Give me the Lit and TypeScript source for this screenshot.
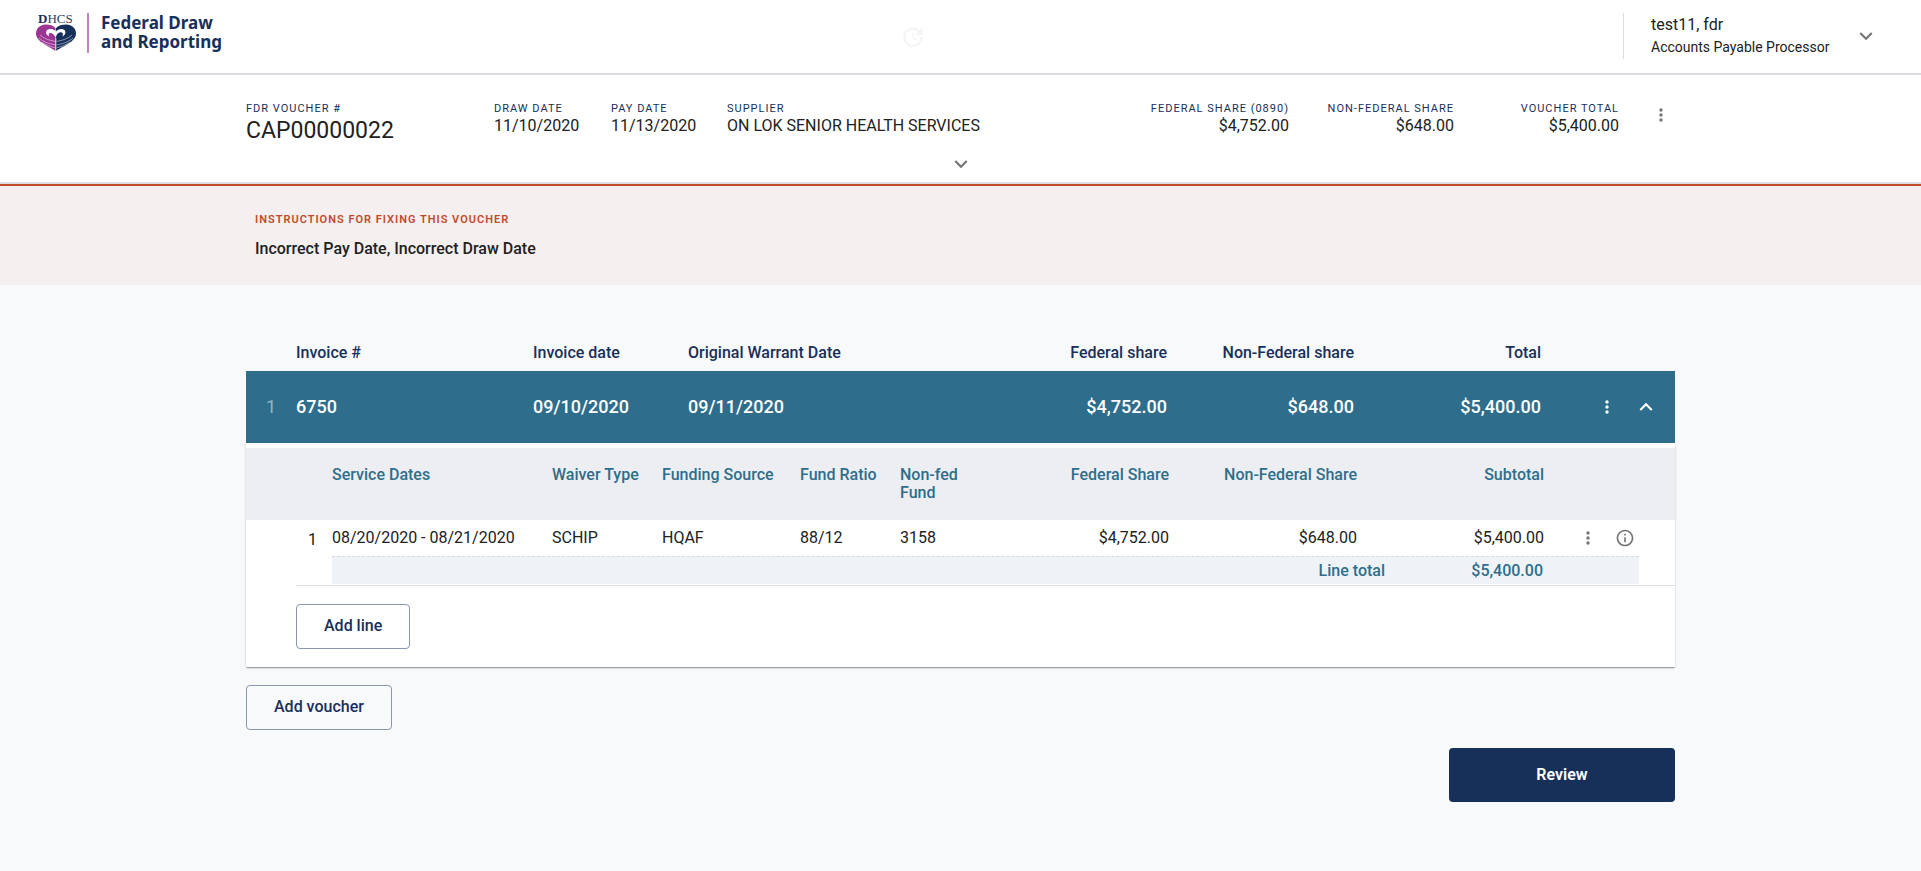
import { LitElement, html, svg, css } from "lit";
import { customElement, property, state } from "lit/decorators.js";

type IconName = "more" | "down" | "up" | "info" | "history";

const ICONS = {
  more: svg`<path d="M12 8c1.1 0 2-.9 2-2s-.9-2-2-2-2 .9-2 2 .9 2 2 2zm0 2c-1.1 0-2 .9-2 2s.9 2 2 2 2-.9 2-2-.9-2-2-2zm0 6c-1.1 0-2 .9-2 2s.9 2 2 2 2-.9 2-2-.9-2-2-2z"/>`,
  down: svg`<path d="M16.59 8.59 12 13.17 7.41 8.59 6 10l6 6 6-6z"/>`,
  up: svg`<path d="M12 8l-6 6 1.41 1.41L12 10.83l4.59 4.58L18 14z"/>`,
  info: svg`<path d="M11 7h2v2h-2zm0 4h2v6h-2zm1-9C6.48 2 2 6.48 2 12s4.48 10 10 10 10-4.48 10-10S17.52 2 12 2zm0 18c-4.41 0-8-3.59-8-8s3.59-8 8-8 8 3.59 8 8-3.59 8-8 8z"/>`,
  history: svg`<path d="M21 10.12h-6.78l2.74-2.82c-2.73-2.7-7.15-2.8-9.88-.1-2.73 2.71-2.73 7.08 0 9.79s7.15 2.71 9.88 0C18.32 15.65 19 14.08 19 12.1h2c0 1.98-.88 4.55-2.64 6.29-3.51 3.48-9.21 3.48-12.72 0-3.5-3.47-3.53-9.11-.02-12.58s9.14-3.47 12.65 0L21 3v7.12zM11.500 8h1.2v4.5l3.3 2-.6 1L11.500 13z"/>`,
};

@customElement("fdr-icon")
class FdrIcon extends LitElement {
  @property() name: IconName = "more";
  @property({ type: Number }) size = 26;

  static styles = css`
    :host { display: block; line-height: 0; }
    .glyph { fill: currentColor; display: block; }
  `;

  render() {
    return html`<svg class="glyph" width=${this.size} height=${this.size} viewBox="0 0 24 24" aria-hidden="true">${ICONS[this.name]}</svg>`;
  }
}

@customElement("fdr-logo")
class FdrLogo extends LitElement {
  static styles = css`
    :host { display: block; }
    .mark { display: block; overflow: visible; }
    .word { font-family: "Liberation Serif", serif; font-size: 13px; fill: #2a4064; }
    .word-bold { font-weight: 700; fill: #17305a; }
  `;

  render() {
    return html`<svg class="mark" width="40" height="40" viewBox="0 0 40 40" role="img" aria-label="DHCS">
      <text class="word" x="2" y="10"><tspan class="word-bold">D</tspan>HCS</text>
      <path fill="#9b3593" d="M19.500 38 C13 33 0 29 0 20.500 C0 15 4.500 11.500 9.500 11.500 C14 11.500 17.500 12.500 19.500 15 Z"/>
      <path fill="#17305a" d="M20 38 C27 33 40 29 40 20.500 C40 15 35.500 11.500 30.500 11.500 C26 11.500 22 12.500 20 15 Z"/>
      <path fill="#fff" d="M20 24 C17.500 22.500 15.500 22.500 13.500 23.500 C9.500 22 9 18 12 16.500 C15 15 18.500 16.500 20 18.500 Z"/>
      <path fill="#9b3593" d="M12.500 21 C14 19 17.500 19.500 19.700 25 C17.500 22.500 15.500 23 13.500 24.500 Z"/>
      <path fill="#fff" d="M20 18.500 C22 16 26 15 28.500 17 C30.500 19.500 29 22 26.500 23.500 C27.500 20.500 26.500 19 24.500 19.200 C22 19.500 20.500 21.500 20 24 Z"/>
      <g fill="none" stroke="#fff" stroke-width="0.7" opacity="0.7">
        <path d="M20 25 V38"/>
        <path d="M4 22 C9 26.500 15 27.500 19.500 28.500"/><path d="M3 25 C8 29.500 15 31 19.500 32"/><path d="M6 29 C10 32 15 33.500 19.500 35"/>
        <path d="M36 22 C31 26.500 25 27.500 20.500 28.500"/><path d="M37 25 C32 29.500 25 31 20.500 32"/><path d="M34 29 C30 32 25 33.500 20.500 35"/>
      </g>
    </svg>`;
  }
}

interface Line {
  dates: string; waiver: string; source: string; ratio: string; fund: string;
  federal: string; nonFederal: string; subtotal: string;
}

@customElement("app-root")
class AppRoot extends LitElement {
  @state() private expanded = true;

  private lines: Line[] = [
    { dates: "08/20/2020 - 08/21/2020", waiver: "SCHIP", source: "HQAF", ratio: "88/12", fund: "3158", federal: "$4,752.00", nonFederal: "$648.00", subtotal: "$5,400.00" },
  ];

  static styles = css`
    :host {
      display: block;
      min-height: 100vh;
      background: #f8f9fb;
      color: #212121;
      font-family: Roboto, "Liberation Sans", sans-serif;
      font-size: 16px;
      line-height: 20px;
    }
    * { box-sizing: border-box; }
    button {
      font: inherit; color: inherit; background: none; border: 0; padding: 0; cursor: pointer;
    }
    h1, h2, p, dl, dd { margin: 0; }
    .wrap { width: min(1429px, 100% - 48px); margin: 0 auto; }

    .topbar {
      display: flex; align-items: flex-start; justify-content: space-between;
      height: 75px; padding: 13px 42px 0 36px;
      background: #fff; border-bottom: 2px solid #dcdde2;
    }
    .brand { display: flex; flex: 1; }
    .brand-name {
      margin: 0 0 0 11px; padding-left: 12px; height: 40px;
      border-left: 2px solid #c583bd;
      font: 700 17px/19px "Noto Sans", "Open Sans", sans-serif; color: #17305a;
    }
    .history { color: #f4f4f5; margin: 11px 89px 0 0; }
    .account { display: flex; flex: 1; justify-content: flex-end; }
    .account-button {
      display: flex; align-items: center; justify-content: space-between;
      width: 256px; height: 46px; padding-left: 27px;
      border-left: 1px solid #dcdde2; text-align: left;
    }
    .account-name, .account-role { display: block; line-height: 22px; }
    .account-role { font-size: 14px; }
    .muted { color: #757575; }

    .summary { background: #fff; border-bottom: 2px solid #dcdde2; height: 109px; }
    .facts {
      display: grid; padding-top: 27px;
      grid-template-columns: 248fr 117fr 116fr 397fr 165fr 165fr 165fr 56px;
    }
    .fact dt {
      font-size: 11px; line-height: 14px; letter-spacing: 1px; color: #17305a;
      white-space: nowrap;
    }
    .fact dd { white-space: nowrap; }
    .fact .large { font-size: 23px; line-height: 30px; }
    .end { text-align: right; }
    .facts-menu { display: flex; justify-content: flex-end; align-items: flex-start; padding: 3px 4px 0 0; }
    .summary-toggle { display: block; margin: 5px auto 0; }

    .notice { background: #f5efef; border-top: 2px solid #c04b2b; height: 101px; }
    .notice-body { padding: 27px 9px 0; }
    .notice h2 {
      font-size: 11px; line-height: 14px; font-weight: 600; letter-spacing: 1px; color: #c04b2b;
    }
    .notice p { margin-top: 12px; font-weight: 500; }

    .main { padding-top: 58px; }
    table, tbody, thead, tfoot { display: block; }
    tr { display: grid; }
    th, td { padding: 0; text-align: left; font-weight: inherit; }
    th.end, td.end { text-align: right; }

    .invoice-row { grid-template-columns: 50px 237fr 155fr 233fr 246fr 187fr 187fr 134px; }
    .invoice-head { color: #17305a; font-weight: 500; padding-bottom: 8px; }
    .invoice {
      align-items: center; height: 72px;
      background: #2e6e8c; color: #fff; font-size: 18px; font-weight: 500;
    }
    .invoice-number { padding-left: 20px; font-weight: 400; color: #94b4c4; }
    .invoice-actions { display: flex; align-items: center; justify-content: flex-end; gap: 16px; padding-right: 16px; }

    .detail-row { display: block; }
    .detail {
      display: block; padding: 5px 0 18px; background: #fff;
      box-shadow: 0 2px 1px -1px rgba(0,0,0,.2), 0 1px 1px rgba(0,0,0,.14), 0 1px 3px rgba(0,0,0,.12);
    }
    .line-row { grid-template-columns: 86px 220fr 110fr 138fr 100fr 80fr 189fr 188fr 187fr 131px; }
    .line-head {
      height: 72px; padding-top: 18px; background: #edeef2;
      color: #2e6e8c; font-weight: 500; line-height: 18px;
    }
    .fund-head { width: 70px; }
    .line { height: 36px; padding-top: 8px; }
    .line-number { padding: 2px 15px 0 0; text-align: right; }
    .line-actions { display: flex; align-items: flex-start; justify-content: flex-end; gap: 17px; padding-right: 40px; }
    .line-total-group { margin-left: 50px; padding: 0 36px 1px; border-bottom: 1px solid #dcdde2; }
    .line-total {
      grid-template-columns: 1053fr 158fr 96px; height: 28px; align-items: center;
      background: #eff3f7; border-top: 1px dashed #d5dade;
      color: #2e6e8c; font-weight: 500;
    }

    .outlined {
      height: 45px; padding: 0 27px 2px; border: 1px solid #8b97ac; border-radius: 4px;
      color: #17305a; font-weight: 500;
    }
    .add-line { margin: 18px 0 0 50px; }
    .add-voucher { margin-top: 18px; }
    .footer { display: flex; justify-content: flex-end; margin-top: 18px; padding-bottom: 48px; }
    .primary {
      width: 226px; height: 54px; border-radius: 4px;
      background: #17305a; color: #fff; font-weight: 600;
    }
  `;

  private fact(label: string, value: string, end = false, large = false) {
    return html`<dl class="fact ${end ? "end" : ""}">
      <dt>${label}</dt><dd class=${large ? "large" : ""}>${value}</dd>
    </dl>`;
  }

  private renderDetail() {
    return html`<tr class="detail-row"><td class="detail" colspan="8">
      <table>
        <thead>
          <tr class="line-row line-head">
            <th></th><th>Service Dates</th><th>Waiver Type</th><th>Funding Source</th><th>Fund Ratio</th>
            <th class="fund-head">Non-fed Fund</th><th class="end">Federal Share</th>
            <th class="end">Non-Federal Share</th><th class="end">Subtotal</th><th></th>
          </tr>
        </thead>
        <tbody>
          ${this.lines.map((l, i) => html`<tr class="line-row line">
            <td class="line-number">${i + 1}</td><td>${l.dates}</td><td>${l.waiver}</td><td>${l.source}</td>
            <td>${l.ratio}</td><td>${l.fund}</td><td class="end">${l.federal}</td>
            <td class="end">${l.nonFederal}</td><td class="end">${l.subtotal}</td>
            <td class="line-actions muted">
              <button aria-label="Line menu"><fdr-icon name="more" size="20"></fdr-icon></button>
              <button aria-label="Line information"><fdr-icon name="info" size="20"></fdr-icon></button>
            </td>
          </tr>`)}
        </tbody>
        <tfoot class="line-total-group">
          <tr class="line-total"><th class="end">Line total</th><td class="end">$5,400.00</td><td></td></tr>
        </tfoot>
      </table>
      <button class="outlined add-line">Add line</button>
    </td></tr>`;
  }

  render() {
    return html`
      <header class="topbar">
        <div class="brand">
          <fdr-logo></fdr-logo>
          <h1 class="brand-name">Federal Draw<br>and Reporting</h1>
        </div>
        <fdr-icon class="history" name="history"></fdr-icon>
        <div class="account">
          <button class="account-button">
            <span>
              <span class="account-name">test11, fdr</span>
              <span class="account-role">Accounts Payable Processor</span>
            </span>
            <fdr-icon class="muted" name="down"></fdr-icon>
          </button>
        </div>
      </header>

      <section class="summary">
        <div class="wrap facts">
          ${this.fact("FDR VOUCHER #", "CAP00000022", false, true)}
          ${this.fact("DRAW DATE", "11/10/2020")}
          ${this.fact("PAY DATE", "11/13/2020")}
          ${this.fact("SUPPLIER", "ON LOK SENIOR HEALTH SERVICES")}
          ${this.fact("FEDERAL SHARE (0890)", "$4,752.00", true)}
          ${this.fact("NON-FEDERAL SHARE", "$648.00", true)}
          ${this.fact("VOUCHER TOTAL", "$5,400.00", true)}
          <div class="facts-menu muted"><button aria-label="Voucher menu"><fdr-icon name="more" size="20"></fdr-icon></button></div>
        </div>
        <button class="summary-toggle muted" aria-label="Show voucher details"><fdr-icon name="down"></fdr-icon></button>
      </section>

      <section class="notice">
        <div class="wrap notice-body">
          <h2>INSTRUCTIONS FOR FIXING THIS VOUCHER</h2>
          <p>Incorrect Pay Date, Incorrect Draw Date</p>
        </div>
      </section>

      <main class="wrap main">
        <table>
          <thead>
            <tr class="invoice-row invoice-head">
              <th></th><th>Invoice #</th><th>Invoice date</th><th>Original Warrant Date</th>
              <th class="end">Federal share</th><th class="end">Non-Federal share</th>
              <th class="end">Total</th><th></th>
            </tr>
          </thead>
          <tbody>
            <tr class="invoice-row invoice">
              <td class="invoice-number">1</td><td>6750</td><td>09/10/2020</td><td>09/11/2020</td>
              <td class="end">$4,752.00</td><td class="end">$648.00</td><td class="end">$5,400.00</td>
              <td class="invoice-actions">
                <button aria-label="Invoice menu"><fdr-icon name="more" size="20"></fdr-icon></button>
                <button aria-label="Toggle invoice" aria-expanded=${this.expanded ? "true" : "false"} @click=${() => (this.expanded = !this.expanded)}>
                  <fdr-icon name=${this.expanded ? "up" : "down"}></fdr-icon>
                </button>
              </td>
            </tr>
            ${this.expanded ? this.renderDetail() : ""}
          </tbody>
        </table>
        <button class="outlined add-voucher">Add voucher</button>
        <div class="footer"><button class="primary">Review</button></div>
      </main>
    `;
  }
}
